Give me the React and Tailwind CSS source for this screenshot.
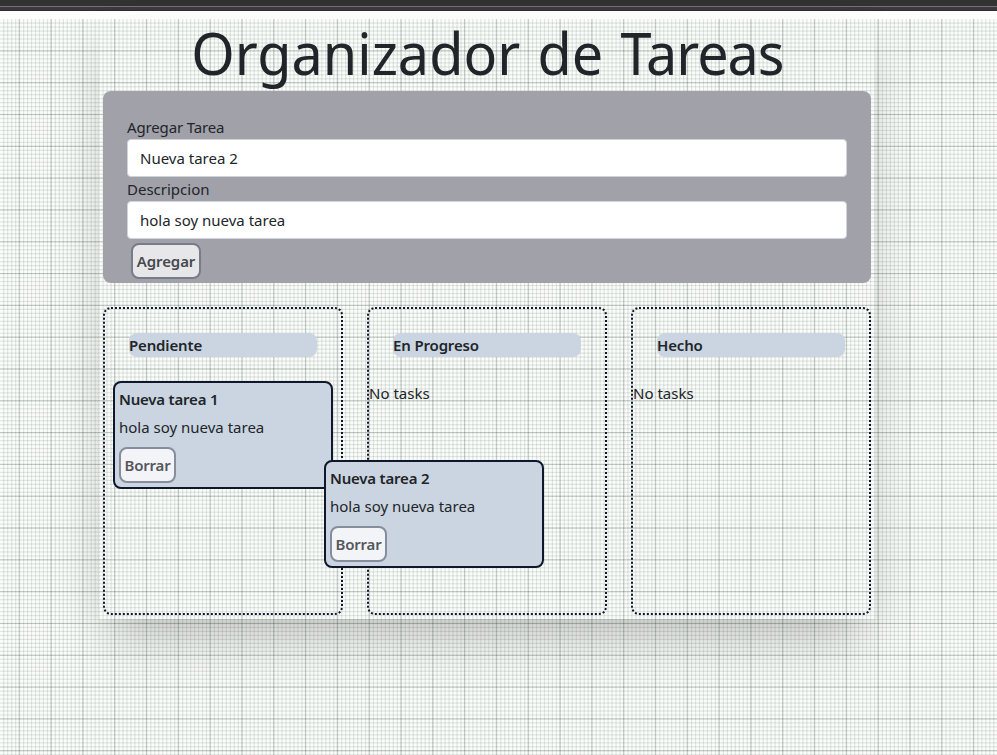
const MAJOR = 31.81;
const MINOR = MAJOR / 8;
const range = (from, step, to) => {
  const out = [];
  for (let v = from; v < to; v += step) out.push(v);
  return out;
};

function Paper() {
  return (
    <svg className="absolute inset-0 h-full w-full" aria-hidden="true">
      <rect width="100%" height="100%" fill="#fafdfa" />
      <g fill="#1e3228">
        {range(3.1, MINOR, 997).map((x) => <rect key={x} x={x} y="0" width="1.2" height="736" fillOpacity="0.11" />)}
        {range(3.5, MINOR, 736).map((y) => <rect key={y} x="0" y={y} width="997" height="1.2" fillOpacity="0.11" />)}
        {range(18.6, MAJOR, 997).map((x) => <rect key={x} x={x} y="0" width="1.1" height="736" fillOpacity="0.18" />)}
        {range(31.3, MAJOR, 736).map((y) => <rect key={y} x="0" y={y} width="997" height="1.1" fillOpacity="0.18" />)}
      </g>
    </svg>
  );
}

function Task({ title }) {
  return (
    <div className="h-[108px] w-[220px] rounded-lg border-2 border-[#0f172a] bg-[#cbd5e1] px-1 pt-1">
      <h3 className="h-6 text-[15px] font-semibold leading-6 tracking-[-0.2px]">{title}</h3>
      <p className="mt-1 h-6 leading-6">hola soy nueva tarea</p>
      <button className="mt-2 block h-9 w-[57px] rounded-lg border-2 border-[#868e9d] bg-[#f3f4f8] text-center text-[15px] font-semibold tracking-[-0.2px] text-[#54575b]">Borrar</button>
    </div>
  );
}

function Column({ title, children }) {
  return (
    <section className="h-[308px] w-[240px] rounded-lg border-2 border-dotted border-[#0f172a]">
      <h2 className="mx-6 mt-6 h-6 w-[188px] rounded-lg bg-[#cbd5e1] text-[15px] font-semibold leading-6 tracking-[-0.15px]">{title}</h2>
      {children}
    </section>
  );
}

export default function App() {
  return (
    <div className="h-[755px] w-[997px] overflow-hidden bg-white font-['Noto_Sans','Open_Sans',sans-serif] text-[15px] text-[#212529]">
      <div className="h-[11px] border-b border-[#2e2c2e] bg-[#323232] pt-[6px]">
        <div className="h-[4px] border-t border-[#747274] bg-[#3b393b]" />
      </div>
      <main className="relative mt-2 h-[736px]">
        <Paper />
        <div className="relative ml-[99px] h-[600px] w-[776px] px-1">
          <div className="absolute inset-0 shadow-2xl" />
          <h1 className="relative h-[72px] whitespace-nowrap text-center text-[59px] leading-[66px]">
            <span className="inline-block scale-x-[0.945] [word-spacing:3px]">Organizador de <span className="tracking-[-1.1px]">Tareas</span></span>
          </h1>
          <form className="relative h-48 rounded-lg bg-[#a1a1aa] px-6 pt-6">
            <label className="block h-6 leading-6 tracking-[-0.15px]">Agregar Tarea</label>
            <input className="block h-[38px] w-full rounded border border-[#ced4da] bg-white px-3" defaultValue="Nueva tarea 2" />
            <label className="block h-6 leading-6">Descripcion</label>
            <input className="block h-[38px] w-full rounded border border-[#ced4da] bg-white px-3" defaultValue="hola soy nueva tarea" />
            <button type="button" className="ml-1 mt-1 block h-9 w-[70px] rounded-lg border-2 border-[#777c8b] bg-[#e7e7ea] text-center font-semibold tracking-[-0.1px] text-[#46494e]">Agregar</button>
          </form>
          <div className="relative mt-6 flex gap-6">
            <Column title="Pendiente"><div className="ml-2 mt-6"><Task title="Nueva tarea 1" /></div></Column>
            <Column title="En Progreso"><p className="mt-6 leading-6">No tasks</p></Column>
            <Column title="Hecho"><p className="mt-6 leading-6">No tasks</p></Column>
          </div>
          <div className="absolute left-[225px] top-[441px]"><Task title="Nueva tarea 2" /></div>
        </div>
      </main>
    </div>
  );
}
